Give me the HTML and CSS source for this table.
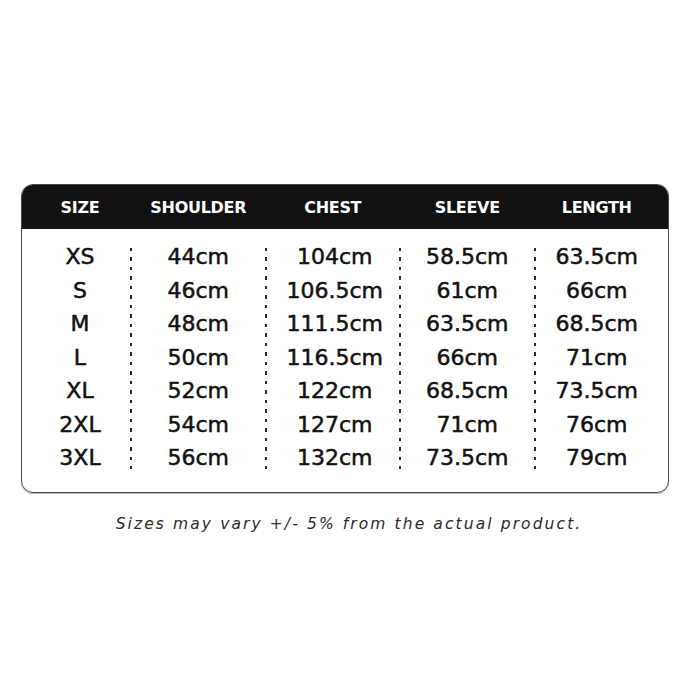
FILE: index.html
```html
<!DOCTYPE html>
<html>
<head>
<meta charset="utf-8">
<link rel="stylesheet" href="styles.css">
</head>
<body>
<div class="page">
  <div class="chart">
    <div class="head">
      <div class="hcell c-size">SIZE</div><div></div>
      <div class="hcell">SHOULDER</div><div></div>
      <div class="hcell">CHEST</div><div></div>
      <div class="hcell">SLEEVE</div><div></div>
      <div class="hcell c-len">LENGTH</div>
    </div>
    <div class="body">
      <div class="col c-size">
        <span>XS</span><span>S</span><span>M</span><span>L</span><span>XL</span><span>2XL</span><span>3XL</span>
      </div>
      <div class="dots"></div>
      <div class="col">
        <span>44cm</span><span>46cm</span><span>48cm</span><span>50cm</span><span>52cm</span><span>54cm</span><span>56cm</span>
      </div>
      <div class="dots"></div>
      <div class="col c-chest">
        <span>104cm</span><span>106.5cm</span><span>111.5cm</span><span>116.5cm</span><span>122cm</span><span>127cm</span><span>132cm</span>
      </div>
      <div class="dots"></div>
      <div class="col">
        <span>58.5cm</span><span>61cm</span><span>63.5cm</span><span>66cm</span><span>68.5cm</span><span>71cm</span><span>73.5cm</span>
      </div>
      <div class="dots"></div>
      <div class="col c-len">
        <span>63.5cm</span><span>66cm</span><span>68.5cm</span><span>71cm</span><span>73.5cm</span><span>76cm</span><span>79cm</span>
      </div>
    </div>
  </div>
  <p class="note">Sizes may vary +/- 5% from the actual product.</p>
</div>
</body>
</html>
```
FILE: styles.css
```css
html, body {
  margin: 0;
  padding: 0;
  background: #ffffff;
}
.page {
  width: 700px;
  height: 700px;
  padding-top: 184px;
  box-sizing: border-box;
  font-family: "DejaVu Sans", sans-serif;
}
.chart {
  margin-left: 21px;
  width: 648px;
  box-sizing: border-box;
  border: 1px solid #4a4a4a;
  border-radius: 12px;
  overflow: hidden;
  box-shadow: 0 1px 1px rgba(0,0,0,0.3);
}
.head, .body {
  display: grid;
  grid-template-columns: 108px 2px 1fr 2px 1fr 2px 1fr 2px 1fr;
}
.head {
  background: #111111;
  height: 44px;
  align-items: center;
}
.hcell {
  color: #ffffff;
  font-weight: bold;
  font-size: 16px;
  letter-spacing: -0.3px;
  text-align: center;
}
.c-size {
  padding-left: 8px;
}
.c-len {
  padding-right: 10px;
}
.c-chest {
  padding-left: 4px;
}
.body {
  padding: 11px 0 17px;
}
.col {
  display: flex;
  flex-direction: column;
  align-items: center;
  font-size: 22px;
  color: #111111;
  -webkit-text-stroke: 0.5px #111111;
}
.col span {
  height: 33.5px;
  line-height: 33.5px;
}
.dots {
  margin: 8px 0 6px;
  background: repeating-linear-gradient(to bottom, #2a2a2a 0 3.5px, transparent 3.5px 9.5px);
}
.note {
  margin: 22px 0 0;
  padding-right: 2px;
  text-align: center;
  font-style: italic;
  font-weight: 200;
  font-size: 15.5px;
  letter-spacing: 2.1px;
  color: #2a2a2a;
}
```
